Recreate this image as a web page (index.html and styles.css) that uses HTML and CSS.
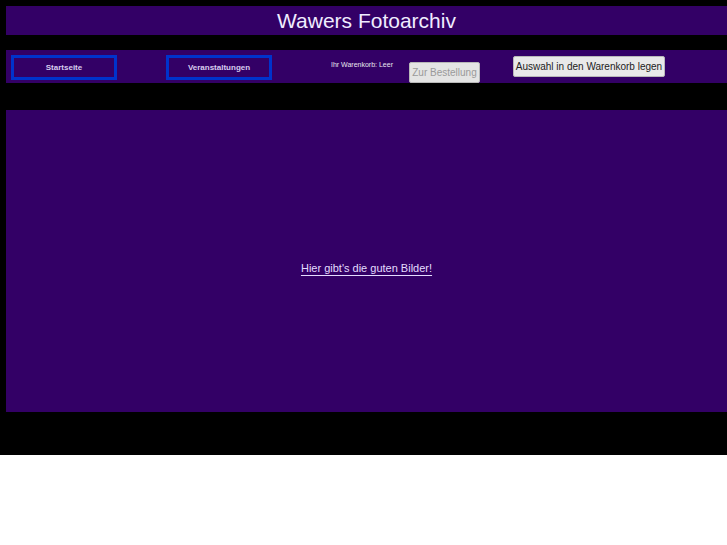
FILE: index.html
```html
<!DOCTYPE html>
<html>
<head>
  <meta charset="utf-8">
  <title>Wawers Fotoarchiv</title>
  <link rel="stylesheet" href="styles.css">
</head>
<body>
  <div class="page">
    <header class="title-bar">
      <h1>Wawers Fotoarchiv</h1>
    </header>

    <nav class="menu">
      <a class="menu-link" href="#">Startseite</a>
      <a class="menu-link second" href="#">Veranstaltungen</a>
      <span class="cart-info">Ihr Warenkorb: Leer</span>
      <button class="btn btn-order" disabled>Zur Bestellung</button>
      <button class="btn btn-add">Auswahl in den Warenkorb legen</button>
    </nav>

    <main class="gallery">
      <a class="gallery-link" href="#">Hier gibt's die guten Bilder!</a>
    </main>
  </div>
</body>
</html>
```

FILE: styles.css
```css
body {
  margin: 0;
  padding: 0;
  font-family: 'Liberation Sans', Arial, sans-serif;
  background-color: #fff;
}

.page {
  background-color: #000;
  height: 455px;
  padding: 6px 0 0 6px;
  box-sizing: border-box;
}

.title-bar {
  background-color: #330066;
  height: 29px;
  display: flex;
  align-items: center;
  justify-content: center;
}

.title-bar h1 {
  margin: 0;
  font-size: 21px;
  font-weight: normal;
  color: #f0ecff;
  line-height: 1;
}

/* navigation row */
.menu {
  background-color: #330066;
  margin-top: 15px;
  height: 33px;
  padding: 5px 0 0 5px;
  box-sizing: border-box;
  display: flex;
  align-items: flex-start;
}

.menu-link {
  width: 106px;
  height: 25px;
  border: 3px solid #0033cc;
  box-sizing: border-box;
  display: flex;
  align-items: center;
  justify-content: center;
  font-size: 8px;
  font-weight: bold;
  color: #d8ccee;
  text-decoration: none;
}

.menu-link.second {
  margin-left: 49px;
}

.cart-info {
  width: 78px;
  margin-left: 59px;
  margin-top: 6px;
  font-size: 7px;
  color: #e8e6ee;
}

.btn {
  font-family: 'Liberation Sans', Arial, sans-serif;
  font-size: 10px;
  height: 21px;
  padding: 0;
  background-color: #e9e9e9;
  border: 1px solid #b8b8b8;
  border-radius: 2px;
  color: #222;
}

.btn-order {
  width: 71px;
  margin-top: 7px;
  background-color: #e4e4e4;
  color: #9a9a9a;
}

.btn-add {
  width: 152px;
  margin-left: 33px;
  margin-top: 1px;
}

/* picture area */
.gallery {
  background-color: #330066;
  margin-top: 27px;
  height: 302px;
  display: flex;
  align-items: center;
  justify-content: center;
}

.gallery-link {
  font-size: 11px;
  color: #e4dcff;
  margin-top: 14px;
  text-underline-offset: 3px;
}
```
